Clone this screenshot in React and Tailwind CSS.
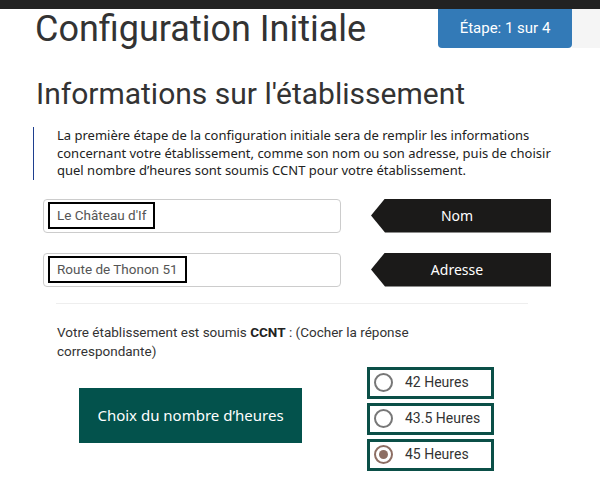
import React, { useState } from 'react'

const roboto = { fontFamily: 'Roboto, "Liberation Sans", sans-serif' }

const Field = ({ value, label }) => (
  <div className="flex items-center">
    <div className="ml-[43px] flex h-[34px] w-[298px] items-center rounded-[4px] border border-[#ccc] bg-white pl-[4px]">
      <span className="flex h-[27px] items-center border-2 border-black px-[7px] text-[13.5px] text-[#555] font-['Roboto',sans-serif]">
        {value}
      </span>
    </div>
    <div className="ml-[30px] flex h-[34px] w-[180px] items-center justify-center bg-[#1b1a19] pr-[8px] text-[14px] text-white font-['Noto_Sans',sans-serif] [clip-path:polygon(0_50%,14px_0,100%_0,100%_100%,14px_100%)]">
      {label}
    </div>
  </div>
)

const Radio = ({ label, checked, onClick }) => (
  <button
    onClick={onClick}
    className="flex h-[32px] w-[127px] items-center border-[3px] border-[#0b4f47] bg-white pl-[4px] text-left"
  >
    <span
      className={`flex h-[19px] w-[19px] items-center justify-center rounded-full border-2 ${
        checked ? 'border-[#8d6e63]' : 'border-[#777]'
      }`}
    >
      {checked && <span className="h-[9px] w-[9px] rounded-full bg-[#8d6e63]" />}
    </span>
    <span className="ml-[12px] text-[14px] text-[#333] font-['Roboto',sans-serif]">{label}</span>
  </button>
)

export default function App() {
  const [hours, setHours] = useState('45')

  return (
    <div className="h-[500px] w-[600px] overflow-hidden bg-white" style={roboto}>
      {/* top bar */}
      <div className="h-[9px] bg-[#222]" />

      {/* header */}
      <div className="flex items-start">
        <h1 className="ml-[35px] mt-[2px] flex-1 text-[36px] font-normal leading-none text-[#333] font-['Roboto',sans-serif]">
          Configuration Initiale
        </h1>
        <div className="flex h-[39px] w-[134px] items-center justify-center rounded-b-[4px] bg-[#337ab7] text-[15px] text-white">
          Étape: 1 sur 4
        </div>
        <div className="h-[39px] w-[28px] bg-[#f5f5f5]" />
      </div>

      <h2 className="ml-[36px] mt-[31px] text-[30px] font-normal leading-none text-[#333] font-['Roboto',sans-serif]">
        Informations sur l'établissement
      </h2>

      {/* intro */}
      <div className="ml-[33px] mt-[18px] border-l border-[#1e3f8f] pl-[23px] text-[13px] leading-[17.5px] text-[#222] font-['Noto_Sans',sans-serif] whitespace-nowrap">
        La première étape de la configuration initiale sera de remplir les informations
        <br />
        concernant votre établissement, comme son nom ou son adresse, puis de choisir
        <br />
        quel nombre d’heures sont soumis CCNT pour votre établissement.
      </div>

      <div className="mt-[19px] flex flex-col gap-[20px]">
        <Field value="Le Château d'If" label="Nom" />
        <Field value="Route de Thonon 51" label="Adresse" />
      </div>

      <div className="ml-[56px] mt-[16px] w-[472px] border-t border-[#eee]" />

      <p className="ml-[57px] mt-[19px] text-[13.5px] leading-[19px] text-[#333] font-['Roboto',sans-serif] whitespace-nowrap">
        Votre établissement est soumis <b className="font-bold text-[#222]">CCNT</b> : (Cocher la réponse
        <br />
        correspondante)
      </p>

      <div className="mt-[6px] flex items-start">
        <button className="ml-[79px] mt-[21px] flex h-[55px] w-[223px] items-center justify-center bg-[#03524c] text-[15px] text-white font-['Noto_Sans',sans-serif]">
          Choix du nombre d’heures
        </button>
        <div className="ml-[65px] flex flex-col gap-[4px]">
          <Radio label="42 Heures" checked={hours === '42'} onClick={() => setHours('42')} />
          <Radio label="43.5 Heures" checked={hours === '43.5'} onClick={() => setHours('43.5')} />
          <Radio label="45 Heures" checked={hours === '45'} onClick={() => setHours('45')} />
        </div>
      </div>
    </div>
  )
}
